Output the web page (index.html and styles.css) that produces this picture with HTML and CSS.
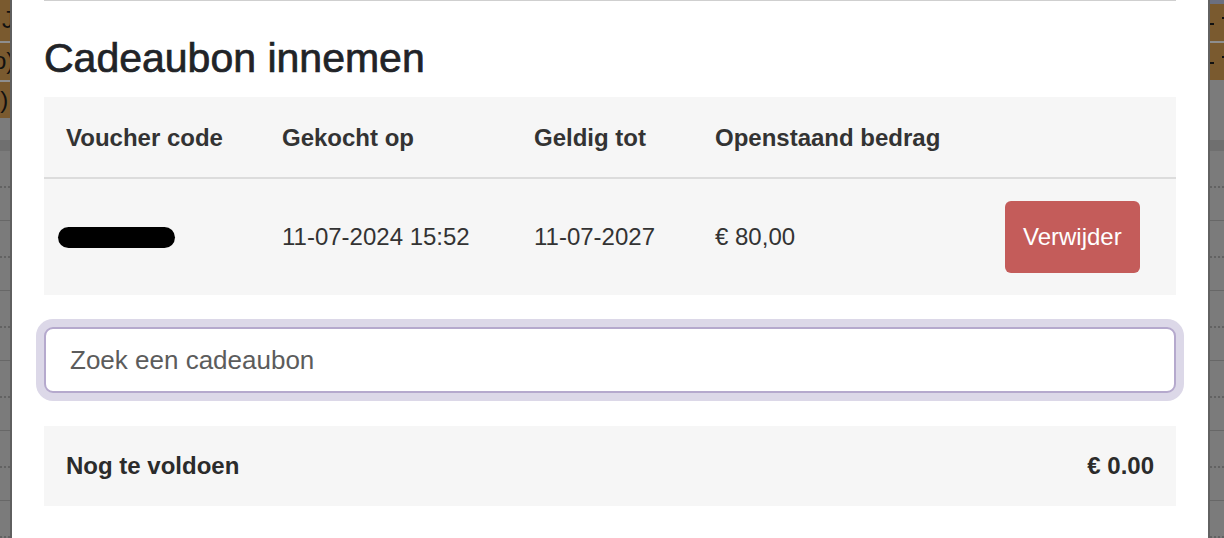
FILE: index.html
```html
<!DOCTYPE html>
<html lang="nl">
<head>
<meta charset="utf-8">
<title>Cadeaubon innemen</title>
<link rel="stylesheet" href="styles.css">
</head>
<body class="page">
  <div class="backdrop backdrop-left">
    <div class="bd-brown bd-r1"><span class="bd-t1">J</span></div>
    <div class="bd-sep"></div>
    <div class="bd-brown bd-r2"><span class="bd-t2">o)</span></div>
    <div class="bd-sep"></div>
    <div class="bd-brown bd-r3"><span class="bd-t3">0)</span></div>
    <div class="bd-grey bd-gap"></div>
    <div class="bd-band"></div>
    <div class="bd-row"><div class="bd-dots"></div></div>
    <div class="bd-row"><div class="bd-dots"></div></div>
    <div class="bd-row"><div class="bd-dots"></div></div>
    <div class="bd-row"><div class="bd-dots"></div></div>
    <div class="bd-row"><div class="bd-dots"></div></div>
    <div class="bd-row"><div class="bd-dots"></div></div>
  </div>

  <div class="modal">
    <div class="modal-rule"></div>
    <h2 class="modal-title">Cadeaubon innemen</h2>

    <table class="voucher-table">
      <colgroup>
        <col class="c1"><col class="c2"><col class="c3"><col class="c4"><col class="c5">
      </colgroup>
      <thead>
        <tr>
          <th>Voucher code</th>
          <th>Gekocht op</th>
          <th>Geldig tot</th>
          <th>Openstaand bedrag</th>
          <th></th>
        </tr>
      </thead>
      <tbody>
        <tr>
          <td><span class="redacted"></span></td>
          <td>11-07-2024 15:52</td>
          <td>11-07-2027</td>
          <td>€ 80,00</td>
          <td><button class="btn-remove" type="button">Verwijder</button></td>
        </tr>
      </tbody>
    </table>

    <input class="search" type="text" placeholder="Zoek een cadeaubon">

    <div class="due">
      <span>Nog te voldoen</span>
      <span>€ 0.00</span>
    </div>
  </div>

  <div class="backdrop backdrop-right">
    <div class="bd-top"></div>
    <div class="bd-brown bd-rr1"><span class="bd-dash d1"></span><span class="bd-dash d2"></span></div>
    <div class="bd-sep"></div>
    <div class="bd-brown bd-rr2"><span class="bd-dash d1"></span><span class="bd-dash d2"></span></div>
    <div class="bd-grey bd-gap-r"></div>
    <div class="bd-band"></div>
    <div class="bd-row"><div class="bd-dots"></div></div>
    <div class="bd-row"><div class="bd-dots"></div></div>
    <div class="bd-row"><div class="bd-dots"></div></div>
    <div class="bd-row"><div class="bd-dots"></div></div>
    <div class="bd-row"><div class="bd-dots"></div></div>
    <div class="bd-row"><div class="bd-dots"></div></div>
  </div>
</body>
</html>
```

FILE: styles.css
```css
* { box-sizing: border-box; }

html, body { margin: 0; padding: 0; }

.page {
  display: flex;
  width: 1224px;
  height: 538px;
  overflow: hidden;
  background: #7b7b7b;
  font-family: "Liberation Sans", Arial, Helvetica, sans-serif;
  color: #333;
}

/* ---------- backdrop strips ---------- */
.backdrop {
  flex: none;
  display: flex;
  flex-direction: column;
  overflow: hidden;
  background: #7b7b7b;
}
.backdrop-left {
  width: 12px;
  border-right: 2px solid #5f5f5f;
}
.backdrop-right {
  width: 16px;
  border-left: 2px solid #626262;
}
.bd-brown {
  flex: none;
  background: #7a5a2f;
  overflow: hidden;
  white-space: nowrap;
  font-size: 24px;
  line-height: 36px;
  color: #111;
  position: relative;
}
.bd-r1 { height: 41px; }
.bd-r2 { height: 37px; }
.bd-r3 { height: 36px; }
.bd-t1 { display: block; padding-left: 2px; margin-top: 2px; }
.bd-t2 { display: block; text-indent: -7px; margin-top: 0; }
.bd-t3 { display: block; text-indent: -13px; margin-top: 0; }
.bd-sep { flex: none; height: 2px; background: #8e8e8e; }
.bd-grey { flex: none; background: #7b7b7b; }
.bd-gap { height: 22px; }
.bd-gap-r { height: 60px; }
.bd-band { flex: none; height: 11px; background: #6f6f6f; }
.bd-row {
  flex: none;
  height: 70px;
  border-bottom: 1px solid #676767;
  padding-top: 35px;
}
.bd-dots {
  height: 0;
  border-top: 2px dotted #626262;
}
.bd-top { flex: none; height: 4px; background: #6b6f80; }
.bd-rr1 { height: 37px; }
.bd-rr2 { height: 37px; }
.bd-dash {
  position: absolute;
  height: 2px;
  background: #111;
}
.bd-dash.d1 { left: 0; top: 19px; width: 4px; }
.bd-dash.d2 { left: 12px; top: 13px; width: 4px; }

/* ---------- modal ---------- */
.modal {
  flex: none;
  width: 1196px;
  height: 538px;
  background: #ffffff;
  padding: 0 32px;
}
.modal-rule {
  height: 1px;
  background: #cfcfcf;
}
.modal-title {
  margin: 33px 0 14px;
  font-size: 41px;
  line-height: 49px;
  font-weight: 400;
  color: #212327;
  -webkit-text-stroke: 0.7px #212327;
}

/* ---------- table ---------- */
.voucher-table {
  width: 100%;
  border-collapse: collapse;
  background: #f6f6f6;
  table-layout: fixed;
}
.c1 { width: 216px; }
.c2 { width: 252px; }
.c3 { width: 181px; }
.c4 { width: 290px; }
.c5 { width: 193px; }
.voucher-table th {
  text-align: left;
  padding: 23px 22px 21px;
  font-size: 24px;
  line-height: 36px;
  font-weight: 700;
  color: #333;
  border-bottom: 2px solid #dcdcdc;
  white-space: nowrap;
}
.voucher-table td {
  padding: 22px;
  font-size: 24px;
  line-height: 36px;
  color: #333;
  vertical-align: middle;
  white-space: nowrap;
}
.redacted {
  display: block;
  width: 117px;
  height: 21px;
  margin-left: -8px;
  border-radius: 11px;
  background: #000;
}
.btn-remove {
  display: block;
  margin: 0;
  padding: 18px;
  border: 0;
  border-radius: 6px;
  background: #c45c5a;
  color: #ffffff;
  font-family: "Liberation Sans", Arial, Helvetica, sans-serif;
  font-size: 24px;
  line-height: 36px;
}

/* ---------- search ---------- */
.search {
  display: block;
  width: 100%;
  height: 66px;
  margin: 32px 0 0;
  padding: 0 24px;
  border: 2px solid #b5a9cd;
  border-radius: 9px;
  box-shadow: 0 0 0 8px #dcd8e8;
  background: #fff;
  font-family: "Liberation Sans", Arial, Helvetica, sans-serif;
  font-size: 26px;
  color: #333;
  outline: none;
}
.search::placeholder {
  color: #5c5c5c;
  opacity: 1;
}

/* ---------- amount due ---------- */
.due {
  display: flex;
  justify-content: space-between;
  margin-top: 33px;
  padding: 22px;
  background: #f6f6f6;
  font-size: 24px;
  line-height: 36px;
  font-weight: 700;
  color: #2b2b2b;
}
```
